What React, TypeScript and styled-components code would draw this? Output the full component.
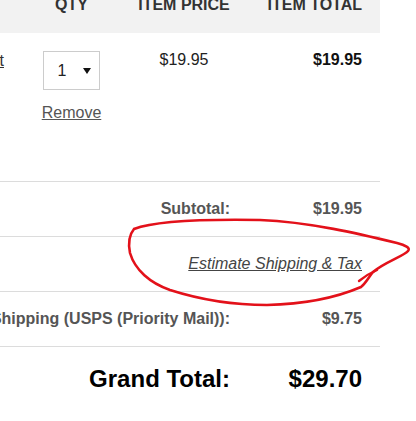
import styled, { createGlobalStyle } from 'styled-components';

const GlobalStyle = createGlobalStyle`
  html, body {
    margin: 0;
    padding: 0;
    background: #fff;
    overflow: hidden;
  }
  body {
    font-family: "Liberation Sans", Arial, sans-serif;
    font-size: 16px;
    color: #222;
  }
`;

const Page = styled.div`
  position: relative;
  width: 416px;
  height: 421px;
  overflow: hidden;
`;

const Cart = styled.div`
  width: 640px;
  margin-left: -260px;
  margin-top: -16px;
`;

const columns = '300px 63px 162px 115px';

const HeaderRow = styled.div`
  display: grid;
  grid-template-columns: ${columns};
  background: #f2f2f2;
  height: 49px;
  box-sizing: border-box;
  padding-top: 12px;
  font-weight: bold;
  font-size: 16px;
  line-height: 18px;
  color: #333;
  text-transform: uppercase;
`;

const HeadCell = styled.div<{ $align?: 'left' | 'center' | 'right' }>`
  text-align: ${(p) => p.$align ?? 'center'};
  padding-right: ${(p) => (p.$align === 'right' ? '18px' : '0')};
  white-space: nowrap;
`;

const ItemRow = styled.div`
  display: grid;
  grid-template-columns: ${columns};
  height: 148px;
  box-sizing: border-box;
  padding-top: 17px;
  line-height: 19px;
`;

const ProductCell = styled.div`
  text-align: right;
  padding-right: 36px;
  padding-top: 1px;
  a {
    color: #333;
    text-decoration: underline;
  }
`;

const QtyCell = styled.div`
  display: flex;
  flex-direction: column;
  align-items: center;
`;

const QtySelect = styled.div`
  width: 57px;
  height: 39px;
  box-sizing: border-box;
  margin-top: 1px;
  margin-left: -1px;
  border: 1px solid #ccc;
  display: flex;
  align-items: center;
  justify-content: space-between;
  padding: 0 8px 0 14px;
  color: #222;
  background: #fff;
`;

const Caret = styled.span`
  width: 0;
  height: 0;
  border-left: 4px solid transparent;
  border-right: 4px solid transparent;
  border-top: 6px solid #111;
  margin-top: 1px;
`;

const RemoveLink = styled.a`
  margin-top: 13px;
  color: #555;
  text-decoration: underline;
`;

const PriceCell = styled.div<{ $bold?: boolean; $right?: boolean }>`
  text-align: ${(p) => (p.$right ? 'right' : 'center')};
  padding-right: ${(p) => (p.$right ? '18px' : '0')};
  font-weight: ${(p) => (p.$bold ? 'bold' : 'normal')};
  color: ${(p) => (p.$bold ? '#111' : '#222')};
`;

const SummaryRow = styled.div<{ $big?: boolean }>`
  display: grid;
  grid-template-columns: 490px 132px;
  padding-right: 18px;
  border-top: 1px solid #dcdcdc;
  height: 55px;
  box-sizing: border-box;
  padding-top: ${(p) => (p.$big ? '18px' : '17px')};
  font-weight: bold;
  font-size: ${(p) => (p.$big ? '24px' : '16px')};
  line-height: ${(p) => (p.$big ? '28px' : '19px')};
  color: ${(p) => (p.$big ? '#000' : '#555')};
  text-align: right;
  white-space: nowrap;
`;

const LinkRow = styled.div`
  border-top: 1px solid #dcdcdc;
  height: 55px;
  box-sizing: border-box;
  padding: 17px 18px 0 0;
  line-height: 19px;
  text-align: right;
`;

const EstimateLink = styled.a`
  font-style: italic;
  color: #444;
  text-decoration: underline;
`;

const Scribble = styled.svg`
  position: absolute;
  left: 0;
  top: 0;
  pointer-events: none;
`;

export default function App() {
  return (
    <Page>
      <GlobalStyle />
      <Cart>
        <HeaderRow>
          <HeadCell $align="left">Item</HeadCell>
          <HeadCell>Qty</HeadCell>
          <HeadCell>Item Price</HeadCell>
          <HeadCell $align="right">Item Total</HeadCell>
        </HeaderRow>
        <ItemRow>
          <ProductCell>
            <a>Sample Product</a>
          </ProductCell>
          <QtyCell>
            <QtySelect>
              <span>1</span>
              <Caret />
            </QtySelect>
            <RemoveLink>Remove</RemoveLink>
          </QtyCell>
          <PriceCell>$19.95</PriceCell>
          <PriceCell $bold $right>
            $19.95
          </PriceCell>
        </ItemRow>
        <SummaryRow>
          <div>Subtotal:</div>
          <div>$19.95</div>
        </SummaryRow>
        <LinkRow>
          <EstimateLink>Estimate Shipping &amp; Tax</EstimateLink>
        </LinkRow>
        <SummaryRow>
          <div>Shipping (USPS (Priority Mail)):</div>
          <div>$9.75</div>
        </SummaryRow>
        <SummaryRow $big>
          <div>Grand Total:</div>
          <div>$29.70</div>
        </SummaryRow>
      </Cart>
      <Scribble width="416" height="421" viewBox="0 0 416 421">
        <path
          d="M 134 229 C 152 222, 200 219, 260 220 C 310 222, 360 234, 397 243 C 405 245, 411 248, 408 251 C 404 256, 385 262, 373 272 C 368 278, 366 283, 361 287 C 340 296, 310 304, 267 305 C 230 305, 195 298, 170 290 C 150 283, 135 270, 130 253 C 128 243, 129 235, 134 229"
          fill="none"
          stroke="#e3111a"
          strokeWidth="2.6"
          strokeLinecap="round"
        />
        <path
          d="M 359 281 C 364 277, 370 273, 377 270"
          fill="none"
          stroke="#e3111a"
          strokeWidth="2.4"
          strokeLinecap="round"
        />
      </Scribble>
    </Page>
  );
}
